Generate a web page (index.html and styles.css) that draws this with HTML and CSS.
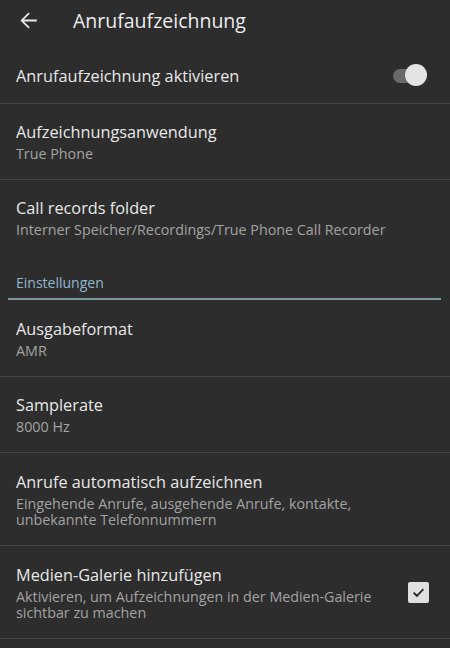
FILE: index.html
```html
<!DOCTYPE html>
<html lang="de">
<head>
<meta charset="utf-8">
<link rel="stylesheet" href="styles.css">
</head>
<body>
<div class="screen">
  <header class="appbar">
    <svg class="back" width="25" height="25" viewBox="0 0 24 24"><path d="M20 11.1H7.6l5.6-5.6L12 4.3 4.3 12l7.7 7.7 1.2-1.2-5.6-5.6H20z" fill="#e8e8e8"/></svg>
    <div class="apptitle">Anrufaufzeichnung</div>
  </header>
  <div class="row r1">
    <div class="text"><div class="title">Anrufaufzeichnung aktivieren</div></div>
    <div class="switch"><div class="track"></div><div class="thumb"></div></div>
  </div>
  <div class="row r2">
    <div class="text"><div class="title">Aufzeichnungsanwendung</div><div class="sub">True Phone</div></div>
  </div>
  <div class="row r3">
    <div class="text"><div class="title">Call records folder</div><div class="sub">Interner Speicher/Recordings/True Phone Call Recorder</div></div>
  </div>
  <div class="section">Einstellungen</div>
  <div class="row r4">
    <div class="text"><div class="title">Ausgabeformat</div><div class="sub">AMR</div></div>
  </div>
  <div class="row r5">
    <div class="text"><div class="title">Samplerate</div><div class="sub">8000 Hz</div></div>
  </div>
  <div class="row r6">
    <div class="text"><div class="title">Anrufe automatisch aufzeichnen</div><div class="sub"><div class="ln">Eingehende Anrufe, ausgehende Anrufe, kontakte,</div><div class="ln">unbekannte Telefonnummern</div></div></div>
  </div>
  <div class="row r7">
    <div class="text"><div class="title">Medien-Galerie hinzufügen</div><div class="sub"><div class="ln">Aktivieren, um Aufzeichnungen in der Medien-Galerie</div><div class="ln">sichtbar zu machen</div></div></div>
    <div class="check"><svg width="15" height="15" viewBox="0 0 15 15"><path d="M2.6 7.6l3.3 3.2 6.5-6.6" fill="none" stroke="#2a2a2a" stroke-width="1.9"/></svg></div>
  </div>
</div>
</body>
</html>
```
FILE: styles.css
```css
html, body { margin: 0; padding: 0; background: #2d2d2d; }
.screen { width: 450px; height: 648px; overflow: hidden; background: #2d2d2d; font-family: "Open Sans", "Noto Sans", sans-serif; color: #e6e6e6; }
.appbar { height: 40px; display: flex; align-items: center; }
.back { margin-left: 16px; width: 25px; height: 25px; }
.apptitle { margin-left: 32px; font-size: 19.5px; color: #ececec; }
.row { display: flex; align-items: center; border-bottom: 1px solid #454545; padding: 0 16px; box-sizing: border-box; }
.r1 { height: 64px; padding-top: 8px; }
.r2 { height: 76px; }
.r3 { height: 88px; border-bottom: none; align-items: flex-start; padding-top: 17px; }
.r4 { height: 77px; }
.r5 { height: 76px; }
.r6 { height: 93px; }
.r7 { height: 93px; }
.row .text { flex: 1; }
.title { font-size: 16.3px; line-height: 22px; color: #e8e8e8; }
.sub { font-size: 14.3px; line-height: 16px; color: #a3a3a3; margin-top: 3px; }
.ln { height: 16px; line-height: 16px; }
.switch { position: relative; width: 38px; height: 24px; margin-right: 3px; }
.track { position: absolute; left: 0; top: 5px; width: 28px; height: 14px; border-radius: 7px; background: #6a6a6a; }
.thumb { position: absolute; left: 12px; top: 0; width: 22px; height: 22px; border-radius: 50%; background: #e4e4e4; }
.section { margin: 0 9px 0 8px; height: 32px; box-sizing: border-box; padding: 5px 0 0 8px; font-size: 14px; line-height: 19px; color: #8fb6cf; border-bottom: 2px solid #7d98a4; }
.check { width: 21px; height: 21px; border-radius: 2px; background: #e0e0e0; display: flex; align-items: center; justify-content: center; margin-right: 5px; }
```
